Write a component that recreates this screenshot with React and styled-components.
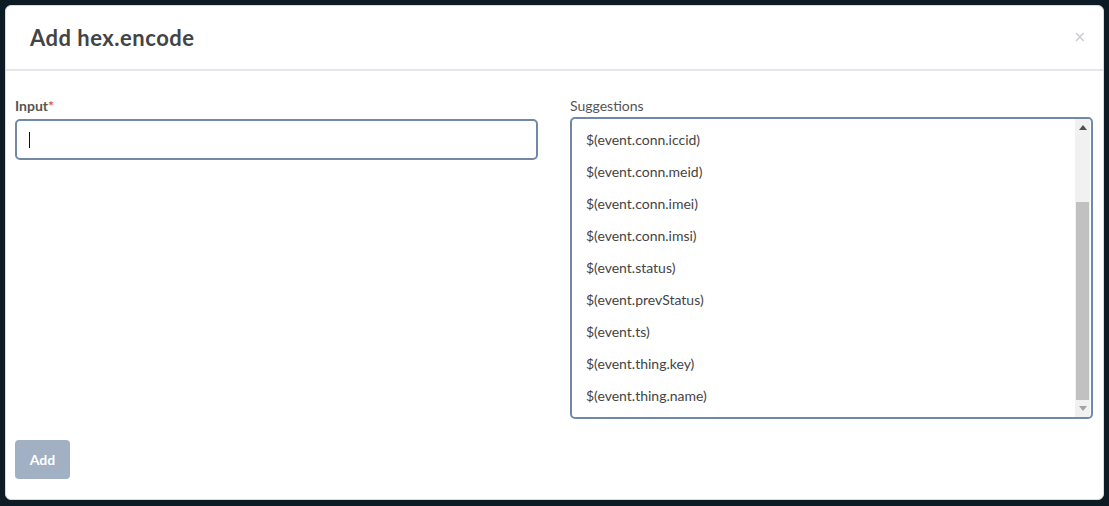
import React from "react";
import styled, { createGlobalStyle } from "styled-components";

const GlobalStyle = createGlobalStyle`
  html, body {
    margin: 0;
    padding: 0;
    background: #0d1b24;
    font-family: Lato, "Noto Sans", sans-serif;
  }
`;

const Page = styled.div`
  padding: 5px 5px 6px 5px;
  height: 506px;
  box-sizing: border-box;
`;

const Modal = styled.div`
  background: #fff;
  border: 1px solid #d5dbe2;
  border-radius: 6px;
  height: 100%;
  box-sizing: border-box;
  display: flex;
  flex-direction: column;
`;

const Header = styled.div`
  height: 65px;
  box-sizing: border-box;
  border-bottom: 2px solid #e3e7ec;
  display: flex;
  align-items: center;
  justify-content: space-between;
  padding: 0 17px 0 24px;
`;

const Title = styled.h2`
  margin: 0;
  font-size: 22px;
  font-weight: 700;
  color: #444;
  letter-spacing: 0.5px;
`;

const Close = styled.button`
  border: none;
  background: none;
  padding: 0;
  color: #c7cdd3;
  font-size: 15px;
  line-height: 1;
  cursor: pointer;
  font-family: "DejaVu Sans", sans-serif;
`;

const Body = styled.div`
  padding: 27px 9px 0 9px;
  display: grid;
  grid-template-columns: 523px 523px;
  column-gap: 32px;
`;

const Field = styled.div`
  display: flex;
  flex-direction: column;
`;

const Label = styled.label`
  font-size: 14px;
  font-weight: ${(p) => (p.$bold ? 700 : 400)};
  color: #555;
  margin-bottom: 5px;
  height: 16px;
  line-height: 16px;
`;

const Req = styled.span`
  color: #e05555;
`;

const Input = styled.div`
  height: 41px;
  box-sizing: border-box;
  border: 2px solid #7189a7;
  border-radius: 5px;
  display: flex;
  align-items: center;
  padding-left: 12px;
`;

const Caret = styled.span`
  width: 1px;
  height: 16px;
  background: #111;
`;

const SuggestBox = styled.div`
  height: 302px;
  margin-top: -2px;
  box-sizing: border-box;
  border: 2px solid #7189a7;
  border-radius: 5px;
  display: flex;
  overflow: hidden;
`;

const List = styled.ul`
  flex: 1;
  list-style: none;
  margin: 0;
  padding: 5px 0 0 0;
`;

const Item = styled.li`
  height: 32px;
  line-height: 32px;
  padding-left: 14px;
  font-size: 14px;
  color: #444;
`;

const Scrollbar = styled.div`
  width: 15px;
  margin-right: 1px;
  background: #f1f1f1;
  display: flex;
  flex-direction: column;
`;

const Arrow = styled.div`
  height: 17px;
  display: flex;
  align-items: center;
  justify-content: center;
`;

const Track = styled.div`
  flex: 1;
  display: flex;
  flex-direction: column;
  padding: 0 1px;
`;

const Thumb = styled.div`
  background: #c1c1c1;
`;

const Footer = styled.div`
  padding: 21px 9px 0 9px;
`;

const AddButton = styled.button`
  width: 55px;
  height: 39px;
  border: none;
  border-radius: 4px;
  background: #a1b0c3;
  color: #fff;
  font-family: Lato, sans-serif;
  font-weight: 700;
  font-size: 14px;
`;

const suggestions = [
  "$(event.conn.iccid)",
  "$(event.conn.meid)",
  "$(event.conn.imei)",
  "$(event.conn.imsi)",
  "$(event.status)",
  "$(event.prevStatus)",
  "$(event.ts)",
  "$(event.thing.key)",
  "$(event.thing.name)",
];

const Triangle = ({ up, color }) => (
  <svg width="8" height="5" viewBox="0 0 8 5">
    <polygon points={up ? "4,0 8,5 0,5" : "0,0 8,0 4,5"} fill={color} />
  </svg>
);

export default function App() {
  return (
    <>
      <GlobalStyle />
      <Page>
        <Modal>
          <Header>
            <Title>Add hex.encode</Title>
            <Close aria-label="Close">×</Close>
          </Header>
          <Body>
            <Field>
              <Label $bold>
                Input<Req>*</Req>
              </Label>
              <Input>
                <Caret />
              </Input>
            </Field>
            <Field>
              <Label>Suggestions</Label>
              <SuggestBox>
                <List>
                  {suggestions.map((s) => (
                    <Item key={s}>{s}</Item>
                  ))}
                </List>
                <Scrollbar>
                  <Arrow>
                    <Triangle up color="#505050" />
                  </Arrow>
                  <Track>
                    <Thumb style={{ marginTop: 66, flex: 1 }} />
                  </Track>
                  <Arrow>
                    <Triangle color="#a3a3a3" />
                  </Arrow>
                </Scrollbar>
              </SuggestBox>
            </Field>
          </Body>
          <Footer>
            <AddButton>Add</AddButton>
          </Footer>
        </Modal>
      </Page>
    </>
  );
}
